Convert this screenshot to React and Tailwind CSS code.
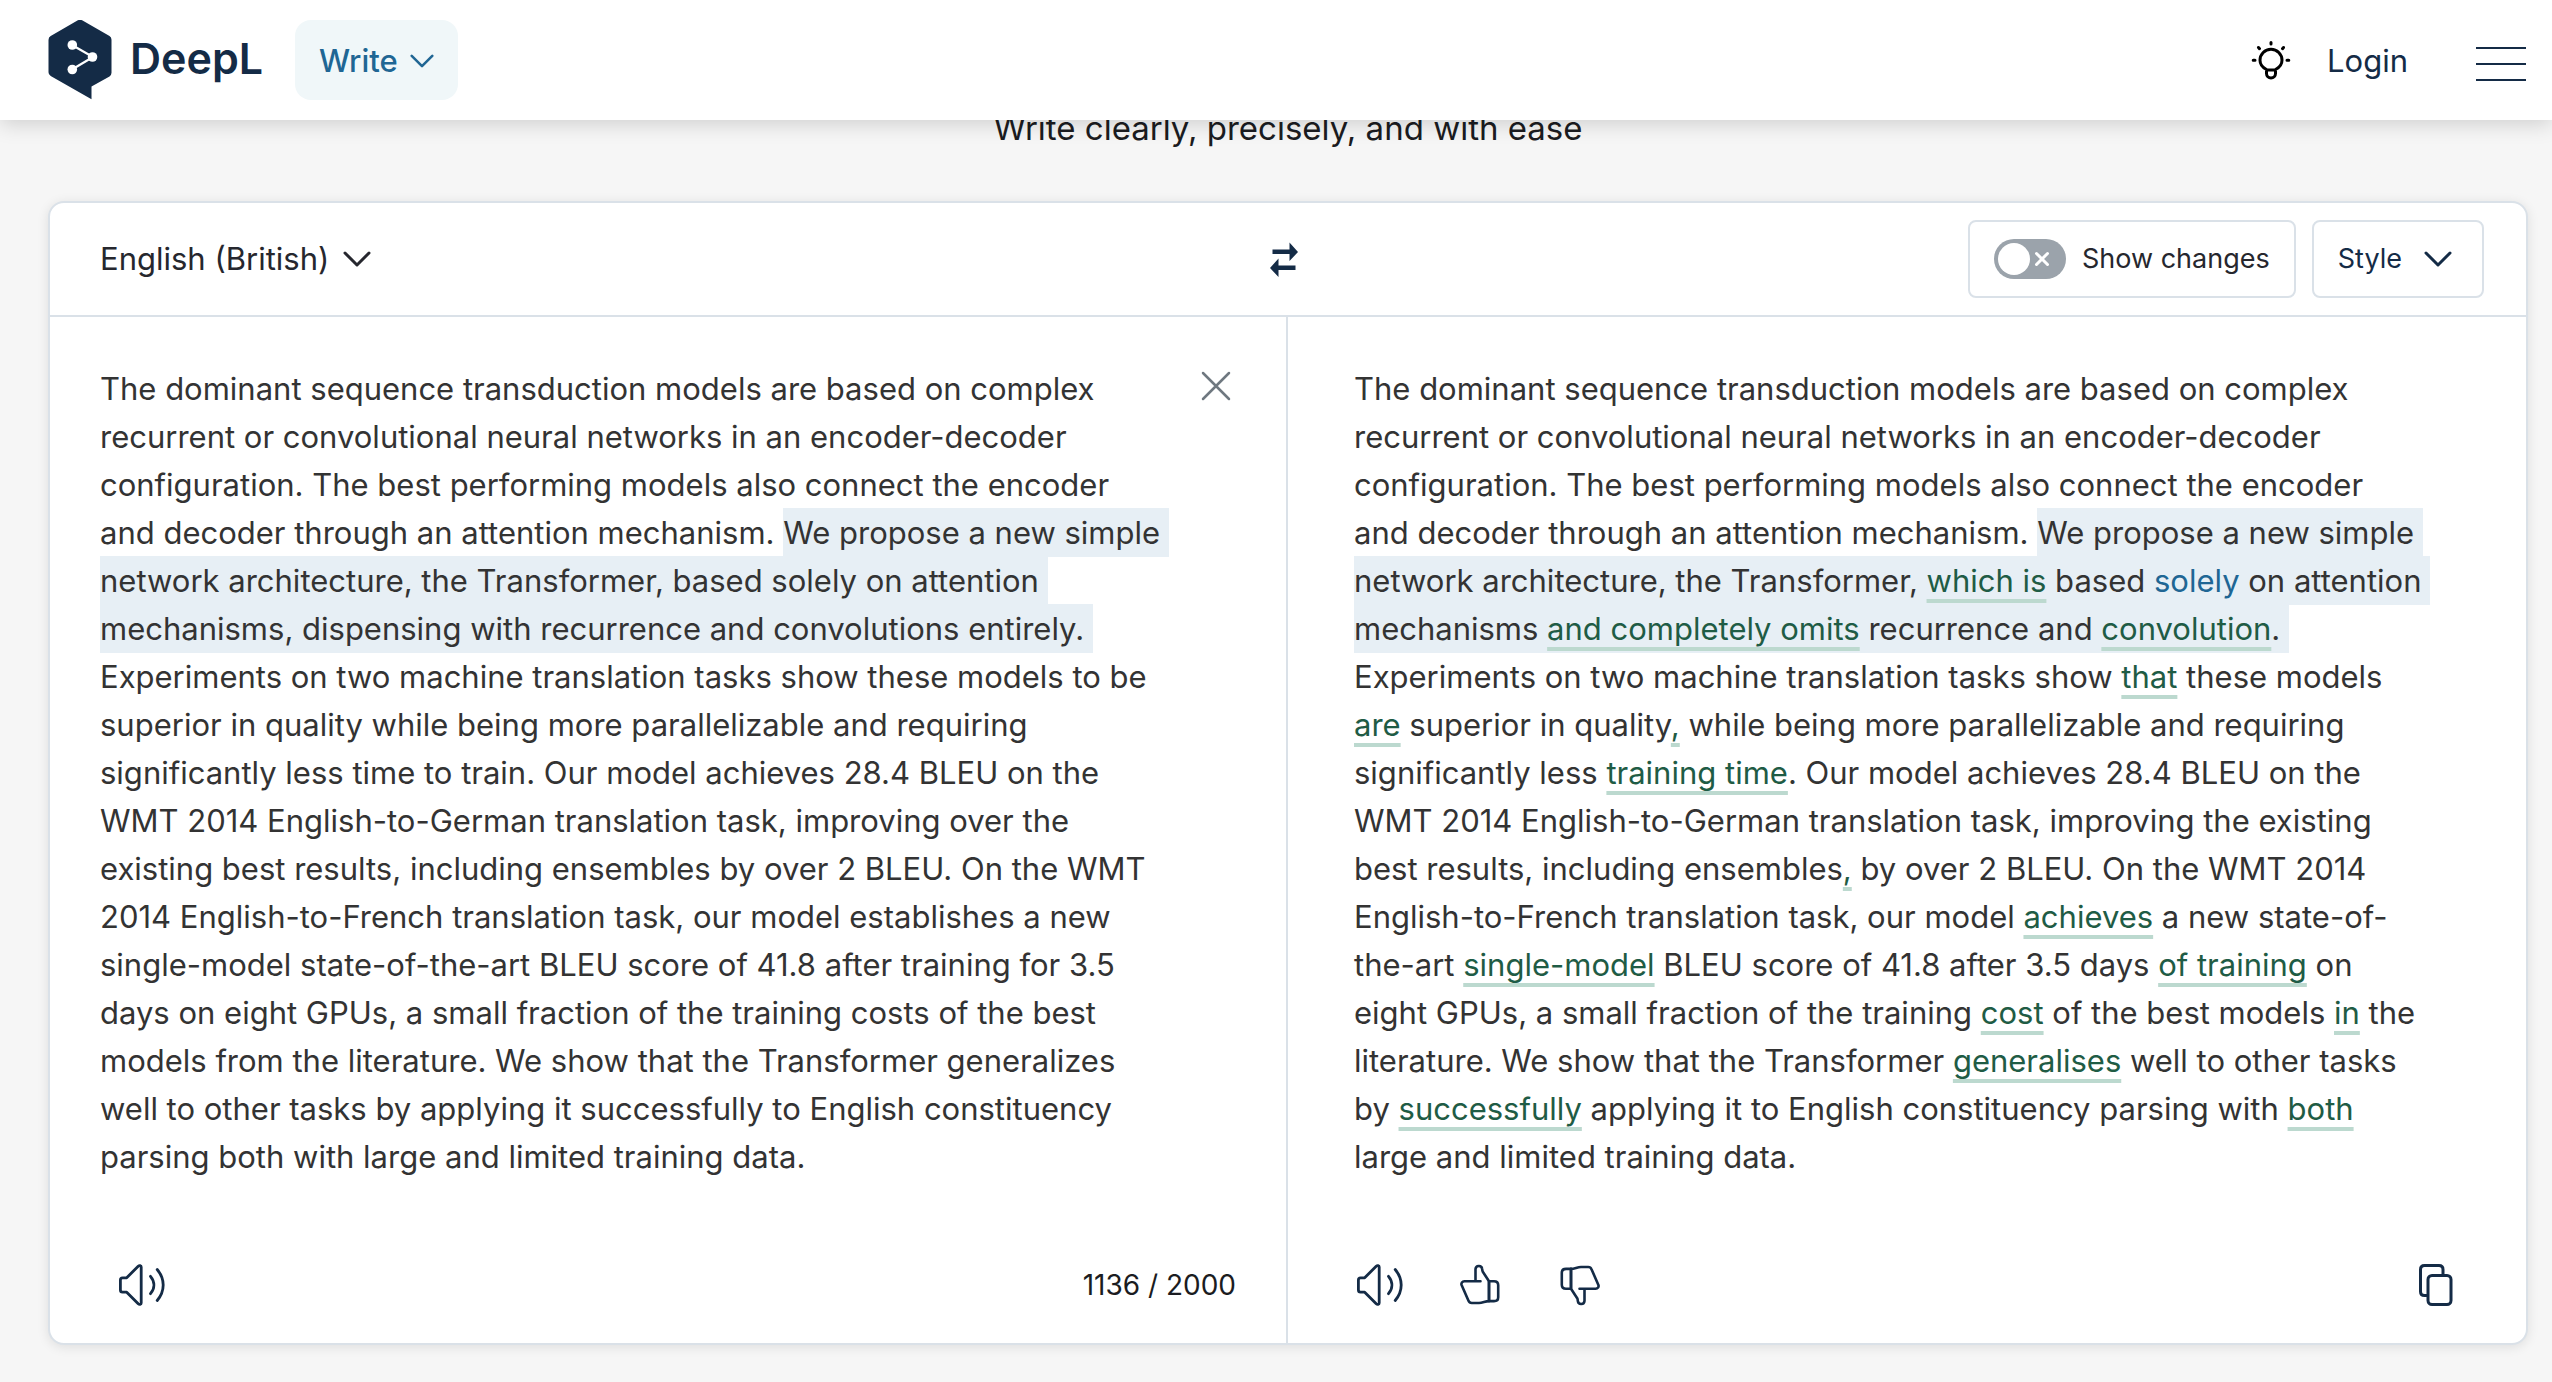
const navy = "#142b46";

function Logo() {
  return (
    <svg className="h-20 w-16" viewBox="0 0 64 80" aria-hidden="true">
      <path fill="#142b46" d="M29 .8a5.500 5.500 0 0 1 6 0l26.500 15.300a4.500 4.500 0 0 1 2 3.900v32.500a4.500 4.500 0 0 1-2 3.900L43.500 66.500V79.300L2.700 56a4.500 4.500 0 0 1-2.200-3.900V20a4.500 4.500 0 0 1 2.200-3.900z" />
      <g fill="none" stroke="#fff" strokeWidth="2.200"><path d="M24 25l21 12-21 12.500" /></g>
      <g fill="#fff"><circle cx="24.300" cy="25" r="4.800" /><circle cx="44.500" cy="37" r="4.800" /><circle cx="24.300" cy="49.500" r="4.800" /></g>
    </svg>
  );
}

function Chevron({ className }) {
  return (
    <svg className={className} viewBox="0 0 28 16" fill="none" stroke="currentColor" strokeWidth="3" strokeLinecap="round" strokeLinejoin="round" aria-hidden="true">
      <path d="M2 2l12 12L26 2" />
    </svg>
  );
}

function Bulb() {
  return (
    <svg className="h-10 w-10" viewBox="0 0 40 40" fill="none" stroke="#000" strokeWidth="3" strokeLinecap="round" strokeLinejoin="round" aria-hidden="true">
      <path d="M15.500 30v-.5C11.500 27.500 9 24.500 9 20.300a11 11 0 0 1 22 0c0 4.200-2.500 7.200-6.500 9.200v.5M15.500 30h9M15.500 30v3.500a4.500 4.500 0 0 0 9 0V30M20 2.500v1.500M7.500 7.500l1 1.200M32.500 7.500l-1 1.200M2.200 20.300h1.800M36 20.300h1.800" />
    </svg>
  );
}

function Speaker() {
  return (
    <svg className="h-11 w-12" viewBox="0 0 48 44" fill="none" stroke={navy} strokeWidth="2.800" strokeLinecap="round" strokeLinejoin="round" aria-hidden="true">
      <path d="M4.500 14.800h4.200L20.200 3.200c1.200-1.100 3-.7 3 .9v35.800c0 1.600-1.800 2-3 .9L8.700 29.200H4.500c-1.200 0-2.100-.9-2.100-2.100V16.900c0-1.200.9-2.100 2.100-2.100z" />
      <path d="M32.500 13.300c4.500 5.400 4.500 12 0 17.400M39.200 6.500c8 9.500 8 21.500 0 31" />
    </svg>
  );
}

function Thumb({ className }) {
  return (
    <svg className={className} viewBox="0 0 40 42" fill="none" stroke={navy} strokeWidth="2.600" strokeLinecap="round" strokeLinejoin="round" aria-hidden="true">
      <path d="M20.500 17.200H4.300c-2 0-3.400 1.900-2.700 3.800l6.900 15.800c.6 1.500 1.500 2.200 3.200 2.200h7.300c3.500 0 6-1.600 10-1.900V17.200l-6.200-9.400c-.6-1 -.4-1.800-.7-3.100-.6-3.700-6.300-3.500-6.600.5v12" />
      <path d="M29 17.200h5c2.600 0 4.200 1.300 4.200 4v12c0 2.600-1.600 3.900-4.200 3.900h-5z" />
    </svg>
  );
}

function Copy() {
  return (
    <svg className="h-11 w-9" viewBox="0 0 36 44" fill="none" stroke={navy} strokeWidth="3" strokeLinecap="round" strokeLinejoin="round" aria-hidden="true">
      <path d="M8.500 32.500h-2c-2.500 0-4-1.500-4-4V6.500c0-2.500 1.500-4 4-4h14.500c2.500 0 4 1.500 4 4v4.500" />
      <rect x="10" y="12.500" width="23" height="29" rx="4" />
    </svg>
  );
}

function Swap() {
  return (
    <svg className="h-9 w-7" viewBox="0 0 28 36" fill={navy} aria-hidden="true">
      <path d="M2.500 8.500h17V1.500L28 11l-8.500 9V13h-17zM25.500 24.500h-17v-7L0 27l8.500 9v-7h17z" />
    </svg>
  );
}

function Mark({ children }) {
  return (
    <span className="text-[#1f5c45] underline decoration-[#bcd9cf] decoration-4 underline-offset-[7px] [text-decoration-skip-ink:none]">
      {children}
    </span>
  );
}

function Active({ children }) {
  return <span className="bg-[#e7eff5] py-[6px]">{children}</span>;
}

function Line({ children }) {
  return <span className="block">{children}</span>;
}

const textClass = "min-w-0 whitespace-pre text-[31px] leading-[48px] text-[#333] outline-none";

function Source() {
  return (
    <div className={textClass} role="textbox" aria-multiline="true" aria-label="Source text" contentEditable suppressContentEditableWarning spellCheck={false}>
      <Line>The dominant sequence transduction models are based on complex</Line>
      <Line>recurrent or convolutional neural networks in an encoder-decoder</Line>
      <Line>configuration. The best performing models also connect the encoder</Line>
      <Line>and decoder through an attention mechanism. <Active>We propose a new simple </Active></Line>
      <Line><Active>network architecture, the Transformer, based solely on attention </Active></Line>
      <Line><Active>mechanisms, dispensing with recurrence and convolutions entirely. </Active></Line>
      <Line>Experiments on two machine translation tasks show these models to be</Line>
      <Line>superior in quality while being more parallelizable and requiring</Line>
      <Line>significantly less time to train. Our model achieves 28.4 BLEU on the</Line>
      <Line>WMT 2014 English-to-German translation task, improving over the</Line>
      <Line>existing best results, including ensembles by over 2 BLEU. On the WMT</Line>
      <Line>2014 English-to-French translation task, our model establishes a new</Line>
      <Line>single-model state-of-the-art BLEU score of 41.8 after training for 3.5</Line>
      <Line>days on eight GPUs, a small fraction of the training costs of the best</Line>
      <Line>models from the literature. We show that the Transformer generalizes</Line>
      <Line>well to other tasks by applying it successfully to English constituency</Line>
      <Line>parsing both with large and limited training data.</Line>
    </div>
  );
}

function Result() {
  return (
    <div className={textClass} role="textbox" aria-multiline="true" aria-label="Improved text" contentEditable suppressContentEditableWarning spellCheck={false}>
      <Line>The dominant sequence transduction models are based on complex</Line>
      <Line>recurrent or convolutional neural networks in an encoder-decoder</Line>
      <Line>configuration. The best performing models also connect the encoder</Line>
      <Line>and decoder through an attention mechanism. <Active>We propose a new simple </Active></Line>
      <Line><Active>network architecture, the Transformer, <Mark>which is</Mark> based <span className="text-[#206694]">solely</span> on attention </Active></Line>
      <Line><Active>mechanisms <Mark>and completely omits</Mark> recurrence and <Mark>convolution</Mark>. </Active></Line>
      <Line>Experiments on two machine translation tasks show <Mark>that</Mark> these models</Line>
      <Line><Mark>are</Mark> superior in quality<Mark>,</Mark> while being more parallelizable and requiring</Line>
      <Line>significantly less <Mark>training time</Mark>. Our model achieves 28.4 BLEU on the</Line>
      <Line>WMT 2014 English-to-German translation task, improving the existing</Line>
      <Line>best results, including ensembles<Mark>,</Mark> by over 2 BLEU. On the WMT 2014</Line>
      <Line>English-to-French translation task, our model <Mark>achieves</Mark> a new state-of-</Line>
      <Line>the-art <Mark>single-model</Mark> BLEU score of 41.8 after 3.5 days <Mark>of training</Mark> on</Line>
      <Line>eight GPUs, a small fraction of the training <Mark>cost</Mark> of the best models <Mark>in</Mark> the</Line>
      <Line>literature. We show that the Transformer <Mark>generalises</Mark> well to other tasks</Line>
      <Line>by <Mark>successfully</Mark> applying it to English constituency parsing with <Mark>both</Mark></Line>
      <Line>large and limited training data.</Line>
    </div>
  );
}

export default function App() {
  return (
    <div className="min-h-screen bg-[#f6f6f6] font-[Inter,sans-serif] text-[#1b1c21]">
      <header className="relative z-10 flex h-[120px] items-center bg-white pr-[26px] pl-12 shadow-[0_4px_20px_rgba(0,0,0,0.16)]">
        <a href="#home" className="flex items-center gap-[18px] text-[#142b46]">
          <Logo />
          <span className="pb-1 text-[43px] leading-[48px] font-semibold">DeepL</span>
        </a>
        <button className="ml-8 flex h-20 items-center gap-3 rounded-2xl bg-[#f0f7f9] px-6 pt-0.5 text-[31px] font-medium text-[#206694]">
          Write
          <Chevron className="h-[14px] w-6" />
        </button>
        <div className="ml-auto flex items-center">
          <button aria-label="Tips"><Bulb /></button>
          <a href="#login" className="ml-9 pt-0.5 text-[31px] text-[#142b46]">Login</a>
          <button aria-label="Menu" className="mt-2 ml-[68px] flex w-[50px] flex-col gap-[14px]">
            <span className="h-[2px] w-full bg-[#142b46]" />
            <span className="h-[2px] w-full bg-[#142b46]" />
            <span className="h-[2px] w-full bg-[#142b46]" />
          </button>
        </div>
      </header>

      <main className="pr-6 pl-12">
        <h2 className="-mt-4 text-center text-[33px] leading-[48px]">Write clearly, precisely, and with ease</h2>
        <section className="mt-[49px] rounded-2xl border-2 border-[#dae1e8] bg-white shadow-[0_2px_12px_rgba(0,0,0,0.1)]">
          <div className="grid h-[114px] grid-cols-[1fr_auto_1fr] items-center border-b-2 border-[#dae1e8] pr-[42px] pl-[34px]">
            <button className="ml-4 flex items-center gap-[14px] justify-self-start text-[31px] text-[#26272e]">
              English (British)
              <Chevron className="h-4 w-7" />
            </button>
            <button aria-label="Swap sides"><Swap /></button>
            <div className="flex gap-4 justify-self-end">
              <label className="flex h-[78px] items-center gap-4 rounded-lg border-2 border-[#dae1e8] px-6 text-[27px] text-[#26272e]">
                <span className="relative flex h-10 w-[72px] items-center rounded-full bg-[#9ba3ab] p-1">
                  <input type="checkbox" className="absolute inset-0 h-full w-full appearance-none" />
                  <span className="size-8 rounded-full bg-white" />
                  <svg className="ml-1 size-4" viewBox="0 0 16 16" stroke="#fff" strokeWidth="3" strokeLinecap="round" aria-hidden="true"><path d="M2.500 2.500l11 11M13.500 2.500l-11 11" /></svg>
                </span>
                Show changes
              </label>
              <button className="flex h-[78px] items-center gap-[22px] rounded-lg border-2 border-[#dae1e8] pr-[30px] pl-6 text-[27px] text-[#142b46]">
                Style
                <Chevron className="h-4 w-7" />
              </button>
            </div>
          </div>
          <div className="grid grid-cols-2">
            <div className="flex flex-col border-r-2 border-[#dae1e8] pt-12 pr-[50px] pb-9 pl-[50px]">
              <div className="flex items-start justify-between">
                <Source />
                <button aria-label="Clear text">
                  <svg className="size-10" viewBox="0 0 40 40" stroke="#6f7880" strokeWidth="2.500" strokeLinecap="round" aria-hidden="true"><path d="M7 8l26 26M33 8L7 34" /></svg>
                </button>
              </div>
              <div className="mt-[82px] flex h-11 items-center justify-between pl-[18px]">
                <button aria-label="Listen to source"><Speaker /></button>
                <span className="text-[28px]">1136 / 2000</span>
              </div>
            </div>
            <div className="flex flex-col pt-12 pr-[72px] pb-9 pl-[66px]">
              <Result />
              <div className="mt-[82px] flex h-11 items-center pl-[2px]">
                <button aria-label="Listen to result"><Speaker /></button>
                <button aria-label="Good result" className="ml-14"><Thumb className="h-[42px] w-10" /></button>
                <button aria-label="Bad result" className="ml-[60px]"><Thumb className="h-[42px] w-10 rotate-180" /></button>
                <button aria-label="Copy" className="ml-auto"><Copy /></button>
              </div>
            </div>
          </div>
        </section>
      </main>
    </div>
  );
}
